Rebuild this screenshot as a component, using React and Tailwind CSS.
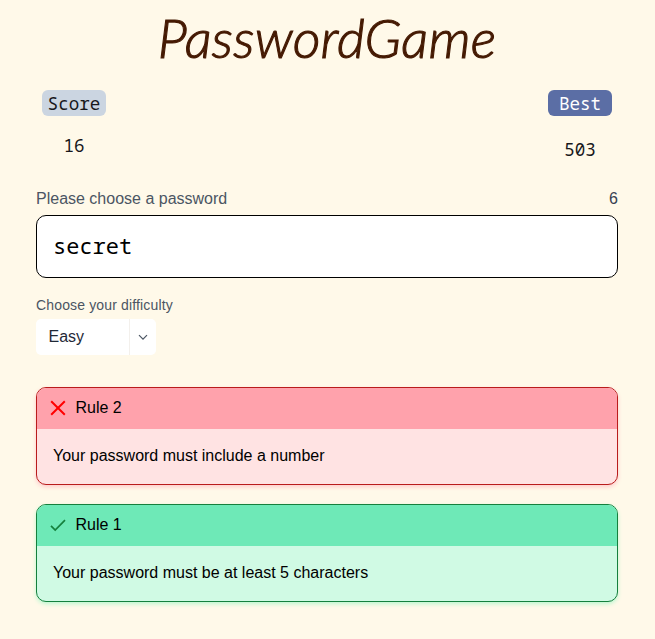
const sans = "font-['Liberation_Sans',Arial,sans-serif]";
const mono = "font-['Noto_Sans_Mono','DejaVu_Sans_Mono',monospace]";

function Rule({ title, text, passed }) {
  return (
    <section
      className={
        "h-[98px] overflow-hidden rounded-[10px] border text-base leading-6 text-black " +
        (passed
          ? "border-[#15803d] bg-[#d0fae4] shadow-[0_2px_4px_#bbf7d0]"
          : "border-[#b91c1c] bg-[#ffe3e3] shadow-[0_2px_4px_#fecaca]")
      }
    >
      <header className={"flex h-[41px] items-center pb-px pl-[13px] " + (passed ? "bg-[#6ee9b7]" : "bg-[#ffa2ac]")}>
        {passed ? (
          <svg className="h-4 w-4" viewBox="0 0 16 16" fill="none" stroke="#15803d" strokeWidth="1.7">
            <path d="M1 8.8 L5.2 13 L15 3.2" />
          </svg>
        ) : (
          <svg className="h-4 w-4" viewBox="0 0 16 16" fill="none" stroke="#ff0000" strokeWidth="2">
            <path d="M1.2 1.2 L14.8 14.8 M14.8 1.2 L1.2 14.8" />
          </svg>
        )}
        <h2 className="ml-[9.5px]">{title}</h2>
      </header>
      <p className="pt-[15px] pl-4">{text}</p>
    </section>
  );
}

export default function App() {
  return (
    <main className={`h-[639px] overflow-hidden bg-[#fff9e9] px-9 pr-[37px] ${sans}`}>
      <h1 className="flex h-[90px] items-start justify-center pt-[6px] font-['Lato',cursive] text-[54px] leading-[64px] font-light whitespace-nowrap text-[#451a03] italic tracking-[0.2px] [-webkit-text-stroke:1.1px_#451a03]">
        PasswordGame
      </h1>
      <div className={`flex h-[98px] justify-between px-[6px] text-[17.6px] leading-[26px] text-[#18181b] ${mono}`}>
        <div className="flex w-16 flex-col items-center">
          <span className="flex h-[26px] w-16 items-center justify-center rounded-[6px] bg-[#cbd5e1] pb-px">Score</span>
          <span className="mt-4">16</span>
        </div>
        <div className="flex w-16 flex-col items-center">
          <span className="flex h-[26px] w-16 items-center justify-center rounded-[6px] bg-[#5b6ea5] pb-px text-white">Best</span>
          <span className="mt-5">503</span>
        </div>
      </div>
      <div className="flex h-[27px] justify-between text-base leading-[21px] text-[#4b5563]">
        <label htmlFor="password">Please choose a password</label>
        <span className="text-[#374151]">6</span>
      </div>
      <input
        id="password"
        defaultValue="secret"
        className={`block h-[63px] w-full rounded-[10px] border border-black bg-white px-4 pb-[3px] text-[22px] text-black outline-none ${mono}`}
      />
      <div className="pt-[17px] text-sm leading-5 tracking-[0.15px] text-[#4b5563]">Choose your difficulty</div>
      <button className="mt-1 flex h-9 w-[120px] items-stretch overflow-hidden rounded-[5px] bg-white text-base text-[#1f2937]">
        <span className="flex w-[94px] items-center border-r border-[#f3f0ec] pb-px pl-[12.5px]">Easy</span>
        <span className="flex flex-1 items-center justify-center">
          <svg className="h-[10px] w-[10px]" viewBox="0 0 10 10" fill="none" stroke="#4b5563" strokeWidth="1.2">
            <path d="M1 3.2 L5 7.2 L9 3.2" />
          </svg>
        </span>
      </button>
      <div className="mt-8 flex flex-col gap-[19px]">
        <Rule title="Rule 2" text="Your password must include a number" passed={false} />
        <Rule title="Rule 1" text="Your password must be at least 5 characters" passed />
      </div>
    </main>
  );
}
